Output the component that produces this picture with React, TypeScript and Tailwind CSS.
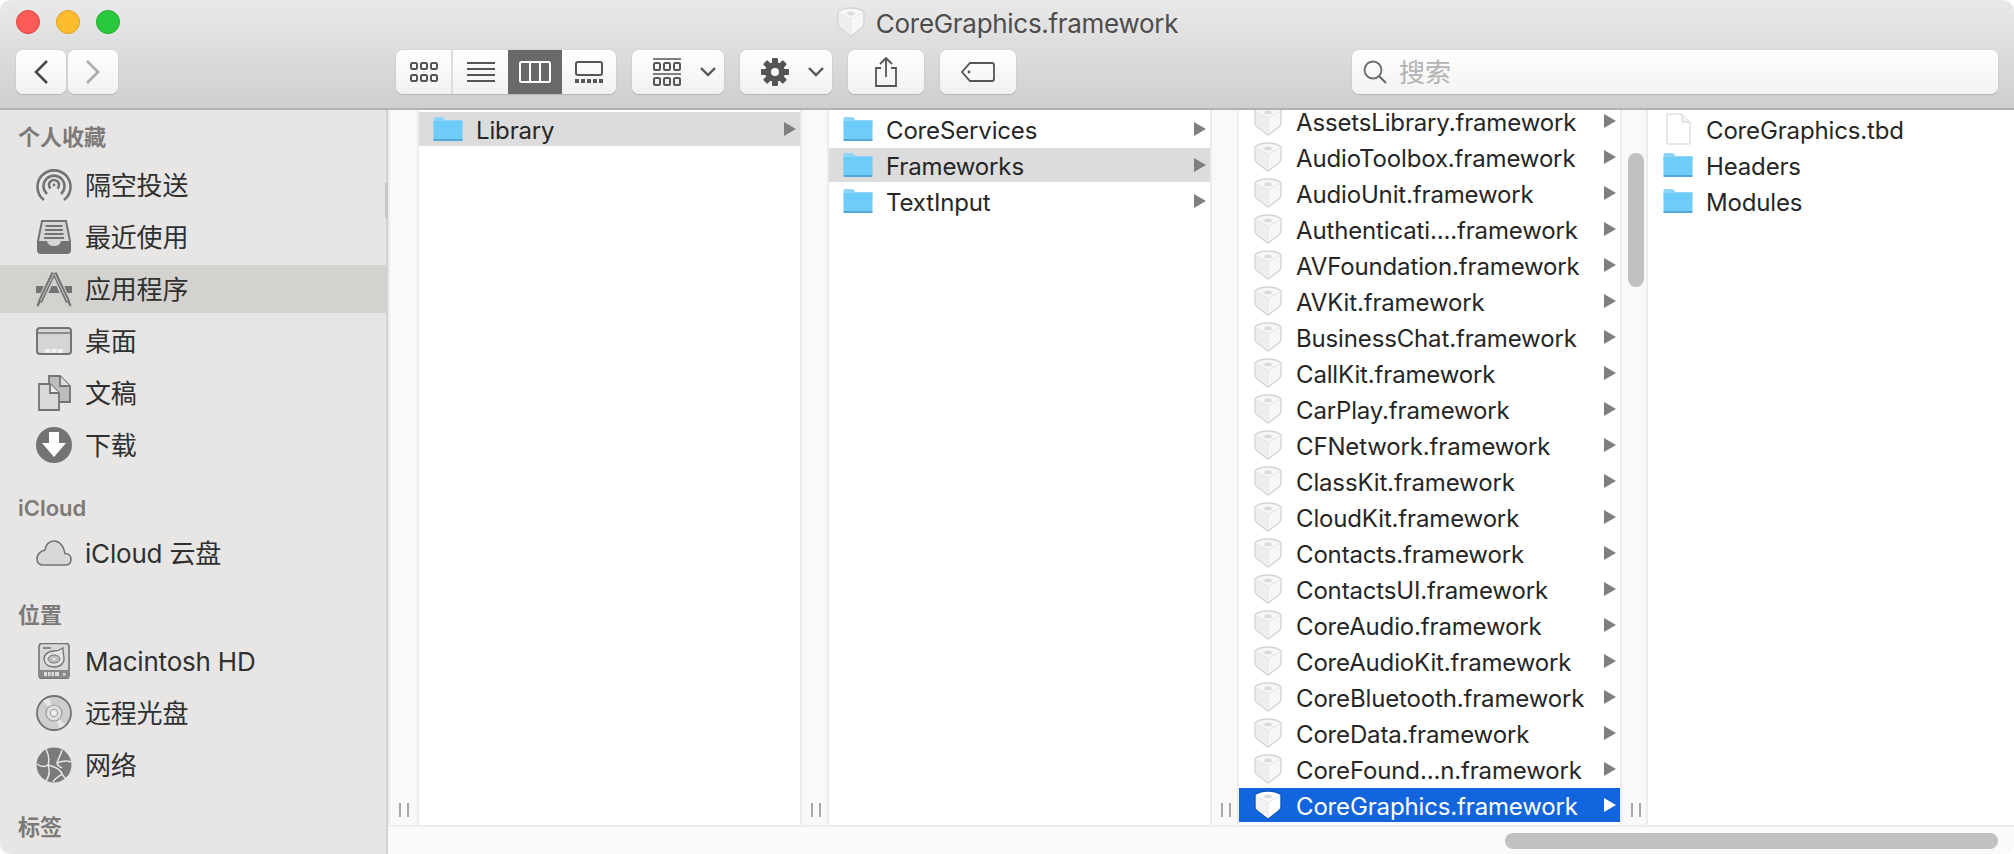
import React from 'react'

const font = "font-['Inter','Noto_Sans_CJK_SC',sans-serif]"

function FolderIcon() {
  return (
    <svg width="30" height="26" viewBox="0 0 30 26" className="shrink-0">
      <path d="M0.5 3 Q0.5 1 2 1 H9 Q10.5 1 11.5 2.5 L12.5 4 H29.5 V10 H0.5 Z" fill="#8ed6f9" />
      <path d="M0.5 5 H29.5 V24 Q29.5 25 28.5 25 H1.5 Q0.5 25 0.5 24 Z" fill="#6fcbf8" />
      <path d="M0.5 23 H29.5 V24 Q29.5 25 28.5 25 H1.5 Q0.5 25 0.5 24 Z" fill="#4ea9dd" />
    </svg>
  )
}

function DocIcon() {
  return (
    <svg width="26" height="32" viewBox="0 0 26 32" className="shrink-0">
      <path d="M2 1 H17 L25 9 V31 H2 Z" fill="#ffffff" stroke="#d2d2d2" strokeWidth="1" />
      <path d="M17 1 V9 H25" fill="#f2f2f2" stroke="#d2d2d2" strokeWidth="1" />
    </svg>
  )
}

function FrameworkIcon({ active = false }: { active?: boolean }) {
  return (
    <svg width="30" height="30" viewBox="0 0 30 30" className="shrink-0">
      <path
        d="M15 1 C20 1 25 2.5 28 4.5 V17 C28 19 27 20 25 21.5 L16 28.5 Q15 29 14 28.5 L5 21.5 C3 20 2 19 2 17 V4.5 C5 2.5 10 1 15 1 Z"
        fill={active ? '#ffffff' : '#f7f7f7'}
        stroke={active ? '#0f57c0' : '#d4d4d4'}
        strokeWidth="1.4"
      />
      <path d="M3 6.5 L15 12 V27.5 L5 20.5 Q3.2 19.5 3.2 17 Z" fill={active ? '#f2f2f2' : '#eeeeee'} />
      <path d="M3 6 L15 12 L27 6 M15 12 V28" fill="none" stroke="#e6e6e6" strokeWidth="1" />
      <ellipse cx="15" cy="6.5" rx="4" ry="2" fill="#dcdcdc" />
    </svg>
  )
}

function ArrowRight({ active = false }: { active?: boolean }) {
  return (
    <svg width="12" height="14" viewBox="0 0 12 14" className="shrink-0">
      <path d="M0 0 L12 7 L0 14 Z" fill={active ? '#ffffff' : '#7f7f7f'} />
    </svg>
  )
}

function Handle() {
  return (
    <div className="flex gap-[6px] h-[14px]">
      <div className="w-[2px] h-full bg-[#a8a8a8]" />
      <div className="w-[2px] h-full bg-[#a8a8a8]" />
    </div>
  )
}

function Gutter({ width, children }: { width: string; children?: React.ReactNode }) {
  return (
    <div className={`${width} shrink-0 relative flex flex-col justify-end pb-[8px] pl-[9px] bg-[#f9f9f9] border-x-2 border-[#ececec]`}>
      {children}
      <Handle />
    </div>
  )
}

type RowProps = { label: string; icon: React.ReactNode; state?: 'selected' | 'active'; arrow?: boolean }

function Row({ label, icon, state, arrow = true }: RowProps) {
  const bg = state === 'selected' ? 'bg-[#dcdcdc]' : state === 'active' ? 'bg-[#1265dc]' : ''
  const color = state === 'active' ? 'text-white' : 'text-[#262626]'
  return (
    <div className={`${bg} ${color} h-[34px] mb-[2px] flex items-center pl-[14px] pr-[4px] text-[24px] tracking-[-0.15px]`}>
      <div className="w-[30px] flex justify-center shrink-0">{icon}</div>
      <span className="ml-[13px] pt-[3px] flex-1 whitespace-nowrap leading-[34px]">{label}</span>
      {arrow && <ArrowRight active={state === 'active'} />}
    </div>
  )
}

const frameworks = [
  'AssetsLibrary.framework',
  'AudioToolbox.framework',
  'AudioUnit.framework',
  'Authenticati....framework',
  'AVFoundation.framework',
  'AVKit.framework',
  'BusinessChat.framework',
  'CallKit.framework',
  'CarPlay.framework',
  'CFNetwork.framework',
  'ClassKit.framework',
  'CloudKit.framework',
  'Contacts.framework',
  'ContactsUI.framework',
  'CoreAudio.framework',
  'CoreAudioKit.framework',
  'CoreBluetooth.framework',
  'CoreData.framework',
  'CoreFound...n.framework',
]

const ic = '#737373'

function AirdropIcon() {
  return (
    <svg width="36" height="36" viewBox="0 0 36 36" fill="none" stroke={ic} strokeWidth="2.6">
      <path d="M8 33 A16.5 16.5 0 1 1 28 33" />
      <path d="M11 27 A10.5 10.5 0 1 1 25 27" />
      <path d="M14.5 21.5 A5 5 0 1 1 21.5 21.5" />
      <circle cx="18" cy="18" r="1.4" fill={ic} stroke="none" />
    </svg>
  )
}

function RecentsIcon() {
  return (
    <svg width="36" height="36" viewBox="0 0 36 36">
      <path d="M6 2 H30 L34 22 V31 Q34 34 31 34 H5 Q2 34 2 31 V22 Z" fill="#d8d7d5" stroke={ic} strokeWidth="2" />
      <path d="M9.5 7 H26.5 M9 11 H27 M8.5 15 H27.5 M8 19 H28" stroke={ic} strokeWidth="1.8" />
      <path d="M2 22 H11 Q12 27 18 27 Q24 27 25 22 H34 V31 Q34 34 31 34 H5 Q2 34 2 31 Z" fill={ic} />
    </svg>
  )
}

function AppsIcon() {
  return (
    <svg width="36" height="36" viewBox="0 0 36 36">
      <path d="M0 15 H9 L6 22 H0 Z M27 15 H36 V22 H30 Z M13 15 H23 L25 22 H11 Z" fill={ic} />
      <path d="M18 1 L32 32 M18 1 L4 32" stroke="#d4d2cf" strokeWidth="7" />
      <path d="M17.5 2 L4 31 M18.5 2 L32 31" stroke={ic} strokeWidth="4.4" />
      <path d="M17.5 3 L4 31 M18.5 3 L32 31" stroke="#d4d2cf" strokeWidth="0.9" />
      <path d="M1.5 35 L4 29.5 M34.5 35 L32 29.5" stroke={ic} strokeWidth="2.2" />
    </svg>
  )
}

function DesktopIcon() {
  return (
    <svg width="36" height="36" viewBox="0 0 36 36">
      <rect x="1" y="5" width="34" height="26" rx="3" fill="#d6d5d3" stroke={ic} strokeWidth="2" />
      <path d="M1 10 H35" stroke={ic} strokeWidth="1.5" />
      <path d="M9 26 H14 V30 H9 Z M15.5 26 H20.5 V30 H15.5 Z M22 26 H27 V30 H22 Z" fill="#f1f1f0" />
    </svg>
  )
}

function DocsIcon() {
  return (
    <svg width="36" height="36" viewBox="0 0 36 36">
      <path d="M13 1 H24 L34 11 V27 H13 Z" fill="#bdbcba" stroke={ic} strokeWidth="1.8" />
      <path d="M24 1 V11 H34" fill="#dddcda" stroke={ic} strokeWidth="1.8" />
      <path d="M3 9 H14 L23 18 V35 H3 Z" fill="#dbdad8" stroke={ic} strokeWidth="1.8" />
      <path d="M14 9 V18 H23" fill="#efefee" stroke={ic} strokeWidth="1.8" />
    </svg>
  )
}

function DownloadIcon() {
  return (
    <svg width="36" height="36" viewBox="0 0 36 36">
      <circle cx="18" cy="18" r="18" fill={ic} />
      <path d="M13 5 H23 V16 H30 L18 30 L6 16 H13 Z" fill="#ffffff" />
    </svg>
  )
}

function CloudIcon() {
  return (
    <svg width="36" height="36" viewBox="0 0 36 36">
      <path
        d="M7 30 H29 C33 30 35 27.5 35 24.5 C35 21 32.5 18.5 29 18.5 C28 12 24 6 18 6 C13 6 9.5 10 9 15 C4 16.5 1 20 1 24 C1 27.5 3.5 30 7 30 Z"
        fill="#d9d8d6"
        stroke={ic}
        strokeWidth="1.6"
      />
    </svg>
  )
}

function DiskIcon() {
  return (
    <svg width="36" height="36" viewBox="0 0 36 36">
      <rect x="3" y="0.5" width="30" height="35" rx="3" fill="#d9d8d6" stroke={ic} strokeWidth="1.6" />
      <path d="M3 27 H33 V33 Q33 35 31 35 H5 Q3 35 3 33 Z" fill="#8a8a8a" />
      <path d="M8 29 H23 V33 H8 Z" fill="#dcdcdc" />
      <path d="M11.5 29 V33 M15 29 V33 M18.5 29 V33" stroke="#8a8a8a" strokeWidth="1" />
      <rect x="27" y="30" width="2.5" height="2.5" fill="#dcdcdc" />
      <path d="M7 5 H15" stroke={ic} strokeWidth="1.6" />
      <path d="M27 5 C27 11 28 13 28 16 C28 21 23.5 24 18 24 C12 24 8 20.5 8 16 C8 11 13 8 18 8 C21 8 24 7 27 5 Z" fill="#e4e3e1" stroke={ic} strokeWidth="1.3" />
      <ellipse cx="18" cy="16" rx="6" ry="4" fill="#bdbcba" stroke={ic} strokeWidth="1" />
      <ellipse cx="18" cy="16" rx="2" ry="1.3" fill="#e4e3e1" />
    </svg>
  )
}

function CdIcon() {
  return (
    <svg width="36" height="36" viewBox="0 0 36 36">
      <circle cx="18" cy="18" r="17" fill="#cfcecc" stroke={ic} strokeWidth="1.8" />
      <path d="M18 18 L7 6 A16 16 0 0 1 13 3 Z M18 18 L29 30 A16 16 0 0 1 23 33 Z" fill="#e8e7e5" />
      <circle cx="18" cy="18" r="8" fill="#dfdedc" stroke="#9a9a9a" strokeWidth="1.2" />
      <circle cx="18" cy="18" r="3.6" fill="#f0efee" stroke="#9a9a9a" strokeWidth="1" />
    </svg>
  )
}

function NetworkIcon() {
  return (
    <svg width="36" height="36" viewBox="0 0 36 36">
      <circle cx="18" cy="18" r="17.5" fill="#7a7a7a" />
      <path
        d="M10 2 C13 8 14 12 12 18 C9 20 5 20 1 17 M12 18 C14 24 13 30 10 34 M12 18 C18 20 24 21 26 27 M26 27 C28 30 29 31 30 32 M26 3 C25 8 22 12 21 16 C21 18 24 20 26 21 M21 16 C26 14 30 13 35 15 M26 27 C22 30 19 31 17 35"
        fill="none"
        stroke="#e7e6e5"
        strokeWidth="1.5"
      />
    </svg>
  )
}

function SideHeading({ label, className }: { label: string; className: string }) {
  return (
    <div className={`${className} h-[30px] leading-[30px] pl-[18px] text-[22px] font-semibold text-[#7c7a78]`}>{label}</div>
  )
}

function SideItem({ label, icon, selected = false }: { label: string; icon: React.ReactNode; selected?: boolean }) {
  return (
    <div className={`${selected ? 'bg-[#d4d2cf]' : ''} h-[48px] mb-[4px] flex items-center pl-[36px] gap-[13px] text-[26px] text-[#303030] tracking-[-0.2px]`}>
      <div className="w-[36px] h-[36px] shrink-0 flex items-center justify-center">{icon}</div>
      <span className="whitespace-nowrap">{label}</span>
    </div>
  )
}

function Sidebar() {
  return (
    <aside className="w-[388px] shrink-0 relative bg-[#e7e6e5] border-r-2 border-[#d3d2d1] pt-[12px]">
      <SideHeading label="个人收藏" className="mb-[9px]" />
      <SideItem label="隔空投送" icon={<AirdropIcon />} />
      <SideItem label="最近使用" icon={<RecentsIcon />} />
      <SideItem label="应用程序" icon={<AppsIcon />} selected />
      <SideItem label="桌面" icon={<DesktopIcon />} />
      <SideItem label="文稿" icon={<DocsIcon />} />
      <SideItem label="下载" icon={<DownloadIcon />} />
      <SideHeading label="iCloud" className="mt-[24px] mb-[6px]" />
      <SideItem label="iCloud 云盘" icon={<CloudIcon />} />
      <SideHeading label="位置" className="mt-[23px] mb-[7px]" />
      <SideItem label="Macintosh HD" icon={<DiskIcon />} />
      <SideItem label="远程光盘" icon={<CdIcon />} />
      <SideItem label="网络" icon={<NetworkIcon />} />
      <SideHeading label="标签" className="mt-[23px]" />
      <div className="absolute -right-[2px] top-[73px] w-[3px] h-[35px] bg-[#c6c5c4]" />
    </aside>
  )
}

function ToolButton({ className, children }: { className: string; children: React.ReactNode }) {
  return (
    <div className={`${className} h-[44px] shrink-0 flex items-center justify-center rounded-[7px] bg-gradient-to-b from-white to-[#f1f1f1] shadow-[0_1px_1px_#b4b4b4,0_0_0_0.5px_#d0d0d0]`}>
      {children}
    </div>
  )
}

const dk = '#555555'

function Chevron() {
  return (
    <svg width="16" height="10" viewBox="0 0 16 10" fill="none" stroke={dk} strokeWidth="2.4" className="shrink-0">
      <path d="M1 1 L8 8 L15 1" />
    </svg>
  )
}

function GearIcon() {
  return (
    <svg width="28" height="28" viewBox="0 0 28 28" className="shrink-0">
      {[0, 45, 90, 135, 180, 225, 270, 315].map((deg) => (
        <rect key={deg} x="11" y="0" width="6" height="8" rx="1" fill={dk} transform={`rotate(${deg} 14 14)`} />
      ))}
      <circle cx="14" cy="14" r="10" fill={dk} />
      <circle cx="14" cy="14" r="4" fill="#f8f8f8" />
    </svg>
  )
}

function Toolbar() {
  return (
    <header className="h-[110px] shrink-0 rounded-t-[10px] bg-gradient-to-b from-[#e9e9e9] to-[#cfcfcf] border-b-2 border-[#b2b2b2]">
      <div className="h-[50px] grid grid-cols-[1fr_auto_1fr] items-center px-[16px] pb-[6px]">
        <div className="flex gap-[16px]">
          <div className="w-[24px] h-[24px] rounded-full bg-[#fc5b57] border border-[#e0443e]" />
          <div className="w-[24px] h-[24px] rounded-full bg-[#fdbb2e] border border-[#dfa023]" />
          <div className="w-[24px] h-[24px] rounded-full bg-[#2ac83f] border border-[#1eab2c]" />
        </div>
        <div className="flex items-center gap-[10px] text-[26px] text-[#4d4d4d] tracking-[-0.3px]">
          <FrameworkIcon />
          <span className="pt-[2px]">CoreGraphics.framework</span>
        </div>
        <div />
      </div>
      <div className="flex items-center pl-[16px] pr-[16px]">
        <ToolButton className="w-[50px]">
          <svg width="16" height="24" viewBox="0 0 16 24" fill="none" stroke="#4a4a4a" strokeWidth="2.6">
            <path d="M14 1 L3 12 L14 23" />
          </svg>
        </ToolButton>
        <ToolButton className="w-[50px] ml-[2px]">
          <svg width="16" height="24" viewBox="0 0 16 24" fill="none" stroke="#adadad" strokeWidth="2.6">
            <path d="M2 1 L13 12 L2 23" />
          </svg>
        </ToolButton>

        <div className="ml-[278px] w-[220px] h-[44px] flex shrink-0 rounded-[7px] overflow-hidden bg-gradient-to-b from-white to-[#f1f1f1] shadow-[0_1px_1px_#b4b4b4,0_0_0_0.5px_#d0d0d0]">
          <div className="w-[57px] flex items-center justify-center border-r-2 border-[#dcdcdc]">
            <svg width="28" height="20" viewBox="0 0 28 20" fill="none" stroke={dk} strokeWidth="2">
              <rect x="1" y="1" width="6" height="6" rx="1.5" />
              <rect x="11" y="1" width="6" height="6" rx="1.5" />
              <rect x="21" y="1" width="6" height="6" rx="1.5" />
              <rect x="1" y="13" width="6" height="6" rx="1.5" />
              <rect x="11" y="13" width="6" height="6" rx="1.5" />
              <rect x="21" y="13" width="6" height="6" rx="1.5" />
            </svg>
          </div>
          <div className="w-[55px] flex items-center justify-center">
            <svg width="28" height="22" viewBox="0 0 28 22" fill="none" stroke={dk} strokeWidth="1.8">
              <path d="M0 2 H28 M0 8 H28 M0 14 H28 M0 20 H28" />
            </svg>
          </div>
          <div className="w-[54px] flex items-center justify-center bg-[#696969]">
            <svg width="32" height="22" viewBox="0 0 32 22" fill="none" stroke="#ffffff" strokeWidth="2">
              <rect x="1" y="1" width="30" height="20" rx="1.5" />
              <path d="M11 1 V21 M21 1 V21" />
            </svg>
          </div>
          <div className="w-[54px] flex items-center justify-center">
            <svg width="28" height="22" viewBox="0 0 28 22">
              <rect x="1" y="1" width="26" height="13" rx="2" fill="none" stroke={dk} strokeWidth="2" />
              <path d="M0 18 H4 V22 H0 Z M6 18 H10 V22 H6 Z M12 18 H16 V22 H12 Z M18 18 H22 V22 H18 Z M24 18 H28 V22 H24 Z" fill={dk} />
            </svg>
          </div>
        </div>

        <ToolButton className="w-[92px] ml-[16px] pl-[20px] pr-[8px] gap-[19px]">
          <svg width="28" height="28" viewBox="0 0 28 28" fill="none" stroke={dk} strokeWidth="2" className="shrink-0">
            <path d="M0 1 H28 M0 16 H28" strokeWidth="1.6" />
            <rect x="1" y="5" width="6" height="7" rx="1.5" />
            <rect x="11" y="5" width="6" height="7" rx="1.5" />
            <rect x="21" y="5" width="6" height="7" rx="1.5" />
            <rect x="1" y="20" width="6" height="7" rx="1.5" />
            <rect x="11" y="20" width="6" height="7" rx="1.5" />
            <rect x="21" y="20" width="6" height="7" rx="1.5" />
          </svg>
          <Chevron />
        </ToolButton>

        <ToolButton className="w-[92px] ml-[16px] pl-[20px] pr-[8px] gap-[19px]">
          <GearIcon />
          <Chevron />
        </ToolButton>

        <ToolButton className="w-[76px] ml-[16px]">
          <svg width="22" height="30" viewBox="0 0 22 30" fill="none" stroke={dk} strokeWidth="1.8">
            <path d="M6 11 H1 V29 H21 V11 H16" />
            <path d="M11 20 V1.5 M5 7 L11 1 L17 7" />
          </svg>
        </ToolButton>

        <ToolButton className="w-[76px] ml-[16px]">
          <svg width="34" height="20" viewBox="0 0 34 20" fill="none" stroke={dk} strokeWidth="1.8">
            <path d="M9 1 H31 Q33 1 33 3 V17 Q33 19 31 19 H9 L1 10 Z" />
            <circle cx="8" cy="10" r="1.4" fill={dk} stroke="none" />
          </svg>
        </ToolButton>

        <div className="ml-[336px] flex-1 h-[44px] flex items-center pl-[11px] rounded-[7px] bg-gradient-to-b from-white to-[#f3f3f3] shadow-[0_1px_1px_#b4b4b4,0_0_0_0.5px_#d0d0d0]">
          <svg width="24" height="24" viewBox="0 0 24 24" fill="none" stroke="#6a6a6a" strokeWidth="1.8">
            <circle cx="10" cy="10" r="8.5" />
            <path d="M16 16 L23 23" strokeWidth="2.2" />
          </svg>
          <span className="ml-[12px] text-[26px] text-[#b2b2b2]">搜索</span>
        </div>
      </div>
    </header>
  )
}

export default function App() {
  return (
    <div className={`${font} w-[2014px] h-[854px] flex flex-col overflow-hidden rounded-[10px] bg-white`}>
      <Toolbar />
      <div className="flex-1 flex min-h-0">
        <Sidebar />
        <div className="flex-1 flex flex-col min-w-0">
          <div className="flex-1 flex min-h-0">
            <Gutter width="w-[31px]" />
            <div className="w-[381px] shrink-0 pt-[2px]">
              <Row label="Library" icon={<FolderIcon />} state="selected" />
            </div>
            <Gutter width="w-[29px]" />
            <div className="w-[381px] shrink-0 pt-[2px]">
              <Row label="CoreServices" icon={<FolderIcon />} />
              <Row label="Frameworks" icon={<FolderIcon />} state="selected" />
              <Row label="TextInput" icon={<FolderIcon />} />
            </div>
            <Gutter width="w-[29px]" />
            <div className="w-[381px] shrink-0 overflow-hidden">
              <div className="-mt-[6px]">
                {frameworks.map((name) => (
                  <Row key={name} label={name} icon={<FrameworkIcon />} />
                ))}
                <Row label="CoreGraphics.framework" icon={<FrameworkIcon active />} state="active" />
              </div>
            </div>
            <Gutter width="w-[28px]">
              <div className="absolute left-[6px] top-[43px] w-[16px] h-[134px] rounded-full bg-[#c1c1c1]" />
            </Gutter>
            <div className="flex-1 pt-[2px] pl-[1px]">
              <Row label="CoreGraphics.tbd" icon={<DocIcon />} arrow={false} />
              <Row label="Headers" icon={<FolderIcon />} arrow={false} />
              <Row label="Modules" icon={<FolderIcon />} arrow={false} />
            </div>
          </div>
          <div className="h-[29px] shrink-0 flex items-center pl-[1117px] pr-[16px] bg-[#fafafa] border-t-2 border-[#ececec]">
            <div className="w-full h-[16px] rounded-full bg-[#c1c1c1]" />
          </div>
        </div>
      </div>
    </div>
  )
}
